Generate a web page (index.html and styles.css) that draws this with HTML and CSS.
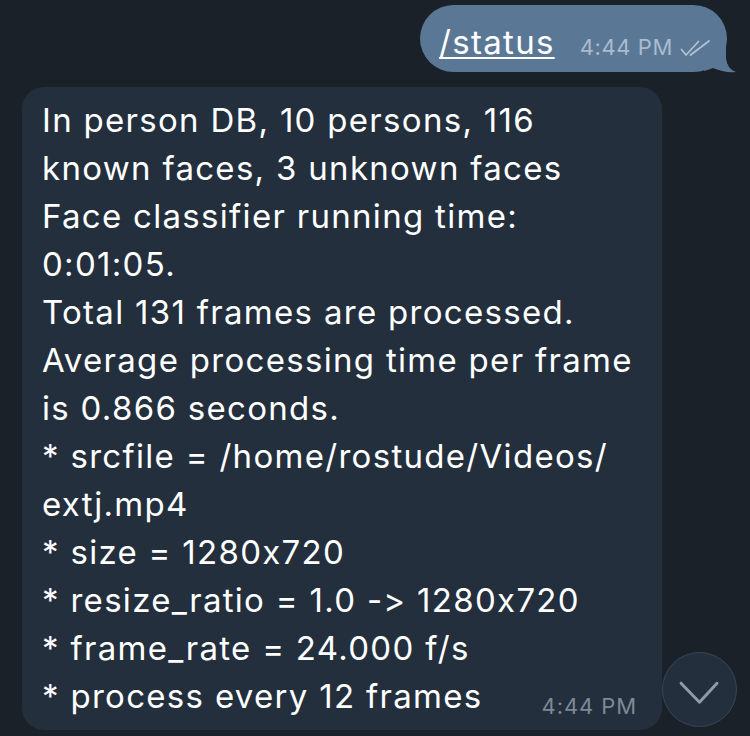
FILE: index.html
```html
<!DOCTYPE html>
<html>
<head>
<meta charset="utf-8">
<link rel="stylesheet" href="styles.css">
</head>
<body>
<div class="chat">
  <div class="row-out">
    <div class="bubble-out">
      <span class="cmd">/status</span>
      <span class="meta-out">4:44 PM</span>
      <svg class="checks" width="30" height="18" viewBox="0 0 30 18">
        <path d="M1.5 9.5 L6 15 L18.5 1.5" fill="none" stroke="#b3c3d3" stroke-width="1.7" stroke-linecap="round" stroke-linejoin="round"/>
        <path d="M10.5 15 L29 1" fill="none" stroke="#b3c3d3" stroke-width="1.7" stroke-linecap="round"/>
      </svg>
      <svg class="tail" width="33" height="31" viewBox="0 0 33 31">
        <path d="M22 0 L22 16 Q23 27 32 30 Q20 31 9 26 Q4 28 0 29 L0 0 Z" fill="#5a7896"/>
      </svg>
    </div>
  </div>
  <div class="bubble-in">
    <div class="line">In person DB, 10 persons, 116</div>
    <div class="line">known faces, 3 unknown faces</div>
    <div class="line">Face classifier running time:</div>
    <div class="line">0:01:05.</div>
    <div class="line">Total 131 frames are processed.</div>
    <div class="line">Average processing time per frame</div>
    <div class="line">is 0.866 seconds.</div>
    <div class="line">* srcfile = /home/rostude/Videos/</div>
    <div class="line">extj.mp4</div>
    <div class="line">* size = 1280x720</div>
    <div class="line">* resize_ratio = 1.0 -&gt; 1280x720</div>
    <div class="line">* frame_rate = 24.000 f/s</div>
    <div class="line last"><span>* process every 12 frames</span><span class="meta-in">4:44 PM</span></div>
  </div>
</div>
<div class="scroll-down">
  <svg width="75" height="75" viewBox="0 0 75 75">
    <path d="M18.5 31 L37.5 50.5 L55.5 31" fill="none" stroke="#8f9ba8" stroke-width="3" stroke-linecap="round" stroke-linejoin="round"/>
  </svg>
</div>
</body>
</html>
```
FILE: styles.css
```css
html, body {
  margin: 0;
  padding: 0;
}
body {
  width: 750px;
  height: 736px;
  overflow: hidden;
  background: #1b2129;
  font-family: Inter, "Noto Sans", sans-serif;
  font-feature-settings: "calt" 0, "liga" 0;
  color: #ffffff;
  position: relative;
}
.chat {
  display: flex;
  flex-direction: column;
  padding-top: 5px;
}
.row-out {
  display: flex;
  justify-content: flex-end;
  padding-right: 23px;
}
.bubble-out {
  position: relative;
  height: 67px;
  box-sizing: border-box;
  padding: 13px 17px 6px 19px;
  border-radius: 34px;
  background: #5a7896;
  display: flex;
  align-items: baseline;
}
.cmd {
  font-size: 33px;
  line-height: 48px;
  letter-spacing: 1.3px;
  text-decoration: underline;
  text-decoration-thickness: 2px;
  text-underline-offset: 3px;
  position: relative;
  z-index: 1;
}
.meta-out {
  margin-left: 25px;
  align-self: flex-end;
  font-size: 22px;
  line-height: 22px;
  margin-bottom: 8px;
  letter-spacing: 0.6px;
  color: #a9bccf;
  position: relative;
  z-index: 1;
}
.checks {
  margin-left: 7px;
  align-self: flex-end;
  margin-bottom: 8px;
  position: relative;
  z-index: 1;
}
.tail {
  position: absolute;
  right: -10px;
  bottom: -1px;
}
.bubble-in {
  margin-top: 15px;
  margin-left: 22px;
  width: 640px;
  box-sizing: border-box;
  padding: 9px 25px 10px 20px;
  border-radius: 22px;
  background: #232f3d;
  font-size: 33px;
  line-height: 48px;
  letter-spacing: 1.3px;
}
.line {
  white-space: nowrap;
}
.line.last {
  display: flex;
  justify-content: space-between;
}
.meta-in {
  align-self: flex-end;
  font-size: 22px;
  line-height: 22px;
  letter-spacing: 0.9px;
  margin-bottom: 3px;
  color: #7d8996;
}
.scroll-down {
  position: absolute;
  left: 662px;
  top: 652px;
  width: 75px;
  height: 75px;
  box-sizing: border-box;
  border-radius: 50%;
  border: 1px solid #3a4654;
  background: #232f3d;
  display: flex;
  align-items: center;
  justify-content: center;
}
.scroll-down svg {
  display: block;
}
```
